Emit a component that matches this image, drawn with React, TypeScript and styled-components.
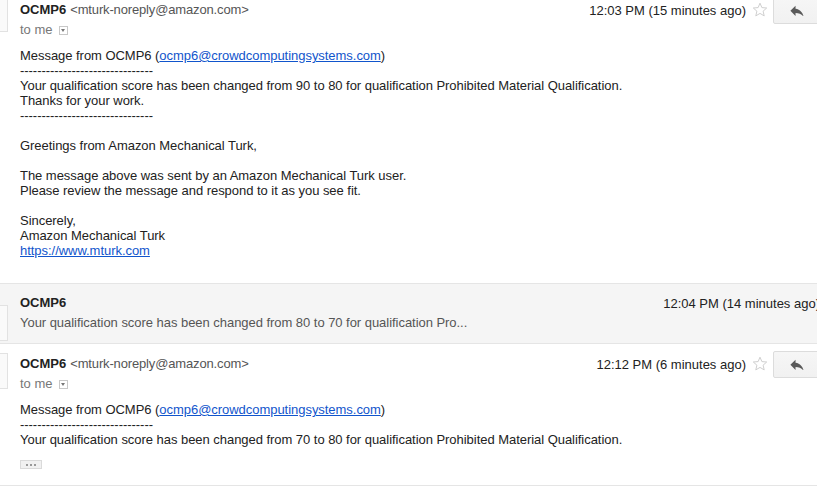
import styled, { createGlobalStyle } from 'styled-components';

const GlobalStyle = createGlobalStyle`
  html, body {
    margin: 0;
    padding: 0;
    background: #fff;
    overflow: hidden;
  }
  body {
    font-family: "Liberation Sans", Arial, sans-serif;
    font-size: 13px;
    color: #222;
  }
`;

const Thread = styled.div`
  width: 822px;
  margin-top: -10px;
`;

const Message = styled.div<{ $collapsed?: boolean }>`
  display: flex;
  background-color: ${ (p) => (p.$collapsed ? '#f5f5f5' : '#fff') };
  border-bottom: 1px solid #e5e5e5;
`;

const Avatar = styled.div<{ $top: number }>`
  width: 7px;
  min-width: 7px;
  height: 34px;
  margin-top: ${ (p) => p.$top }px;
  border: 1px solid #e2e2e2;
  border-left: none;
  background: #fafafa;
`;

const Content = styled.div<{ $pt: number; $pb: number }>`
  flex: 1;
  padding: ${ (p) => p.$pt }px 2px ${ (p) => p.$pb }px 12px;
`;

const Header = styled.div`
  display: flex;
  justify-content: space-between;
  align-items: flex-start;
`;

const Line = styled.div`
  height: 20px;
  line-height: 20px;
  white-space: nowrap;
`;

const Sender = styled.span`
  font-weight: bold;
  color: #222;
`;

const Address = styled.span`
  color: #555;
  margin-left: 4px;
  letter-spacing: -0.15px;
`;

const ToMe = styled(Line)`
  display: flex;
  align-items: center;
  color: #777;
`;

const Dropdown = styled.span`
  display: inline-flex;
  align-items: center;
  justify-content: center;
  width: 9px;
  height: 9px;
  margin-left: 6px;
  border: 1px solid #c8c8c8;
  box-sizing: border-box;
  &::after {
    content: '';
    border-left: 2.5px solid transparent;
    border-right: 2.5px solid transparent;
    border-top: 3px solid #777;
  }
`;

const Actions = styled.div`
  display: flex;
  align-items: center;
  height: 20px;
`;

const Time = styled.span`
  color: #222;
  white-space: nowrap;
`;

const Star = styled.svg`
  width: 16px;
  height: 16px;
  margin: 0 5px 0 6px;
`;

const ReplyButton = styled.div`
  width: 47px;
  height: 27px;
  box-sizing: border-box;
  display: flex;
  align-items: center;
  justify-content: center;
  border: 1px solid #dcdcdc;
  border-radius: 2px;
  background: linear-gradient(#f6f6f6, #f1f1f1);
`;

const Body = styled.div<{ $mt: number }>`
  margin-top: ${ (p) => p.$mt }px;
  line-height: 15px;
  white-space: nowrap;
  letter-spacing: -0.04px;
`;

const Link = styled.a`
  color: #15c;
  text-decoration: underline;
`;

const Snippet = styled(Line)`
  color: #555;
  letter-spacing: -0.04px;
`;

const More = styled.div`
  display: flex;
  align-items: center;
  justify-content: center;
  gap: 2px;
  width: 22px;
  height: 9px;
  margin-top: 13px;
  box-sizing: border-box;
  border: 1px solid #dadada;
  background: #f1f1f1;
  span {
    width: 2px;
    height: 2px;
    background: #999;
  }
`;

const dashes = '-------------------------------';

function StarIcon() {
  return (
    <Star viewBox="0 0 16 16">
      <path
        d="M8 1.2l1.9 4.4 4.8.4-3.6 3.2 1.1 4.7L8 11.4l-4.2 2.5 1.1-4.7L1.3 6l4.8-.4z"
        fill="none"
        stroke="#cfcfcf"
        strokeWidth="1"
        strokeLinejoin="round"
      />
    </Star>
  );
}

function ReplyIcon() {
  return (
    <svg width="14" height="11" viewBox="3 4 18 15">
      <path d="M10 9V5l-7 7 7 7v-4.1c5 0 8.5 1.6 11 5.1-1-5-4-10-11-11z" fill="#5a5a5a" />
    </svg>
  );
}

function ExpandedHeader({ time }: { time: string }) {
  return (
    <Header>
      <div>
        <Line>
          <Sender>OCMP6</Sender>
          <Address>&lt;mturk-noreply@amazon.com&gt;</Address>
        </Line>
        <ToMe>
          to me
          <Dropdown />
        </ToMe>
      </div>
      <Actions>
        <Time>{ time }</Time>
        <StarIcon />
        <ReplyButton>
          <ReplyIcon />
        </ReplyButton>
      </Actions>
    </Header>
  );
}

function App() {
  return (
    <>
      <GlobalStyle />
      <Thread>
        <Message>
          <Avatar $top={ 6 } />
          <Content $pt={ 10 } $pb={ 25 }>
            <ExpandedHeader time="12:03 PM (15 minutes ago)" />
            <Body $mt={ 8 }>
              Message from OCMP6 (<Link href="#">ocmp6@crowdcomputingsystems.com</Link>)<br />
              { dashes }<br />
              Your qualification score has been changed from 90 to 80 for qualification Prohibited Material Qualification.<br />
              Thanks for your work.<br />
              { dashes }<br />
              <br />
              Greetings from Amazon Mechanical Turk,<br />
              <br />
              The message above was sent by an Amazon Mechanical Turk user.<br />
              Please review the message and respond to it as you see fit.<br />
              <br />
              Sincerely,<br />
              Amazon Mechanical Turk<br />
              <Link href="#">https://www.mturk.com</Link>
            </Body>
          </Content>
        </Message>

        <Message $collapsed>
          <Avatar $top={ 21 } />
          <Content $pt={ 9 } $pb={ 10 }>
            <Header>
              <Line>
                <Sender>OCMP6</Sender>
              </Line>
              <Actions>
                <Time>12:04 PM (14 minutes ago)</Time>
              </Actions>
            </Header>
            <Snippet>Your qualification score has been changed from 80 to 70 for qualification Pro...</Snippet>
          </Content>
        </Message>

        <Message>
          <Avatar $top={ 9 } />
          <Content $pt={ 10 } $pb={ 16 }>
            <ExpandedHeader time="12:12 PM (6 minutes ago)" />
            <Body $mt={ 8 }>
              Message from OCMP6 (<Link href="#">ocmp6@crowdcomputingsystems.com</Link>)<br />
              { dashes }<br />
              Your qualification score has been changed from 70 to 80 for qualification Prohibited Material Qualification.
            </Body>
            <More>
              <span />
              <span />
              <span />
            </More>
          </Content>
        </Message>
      </Thread>
    </>
  );
}

export default App;
